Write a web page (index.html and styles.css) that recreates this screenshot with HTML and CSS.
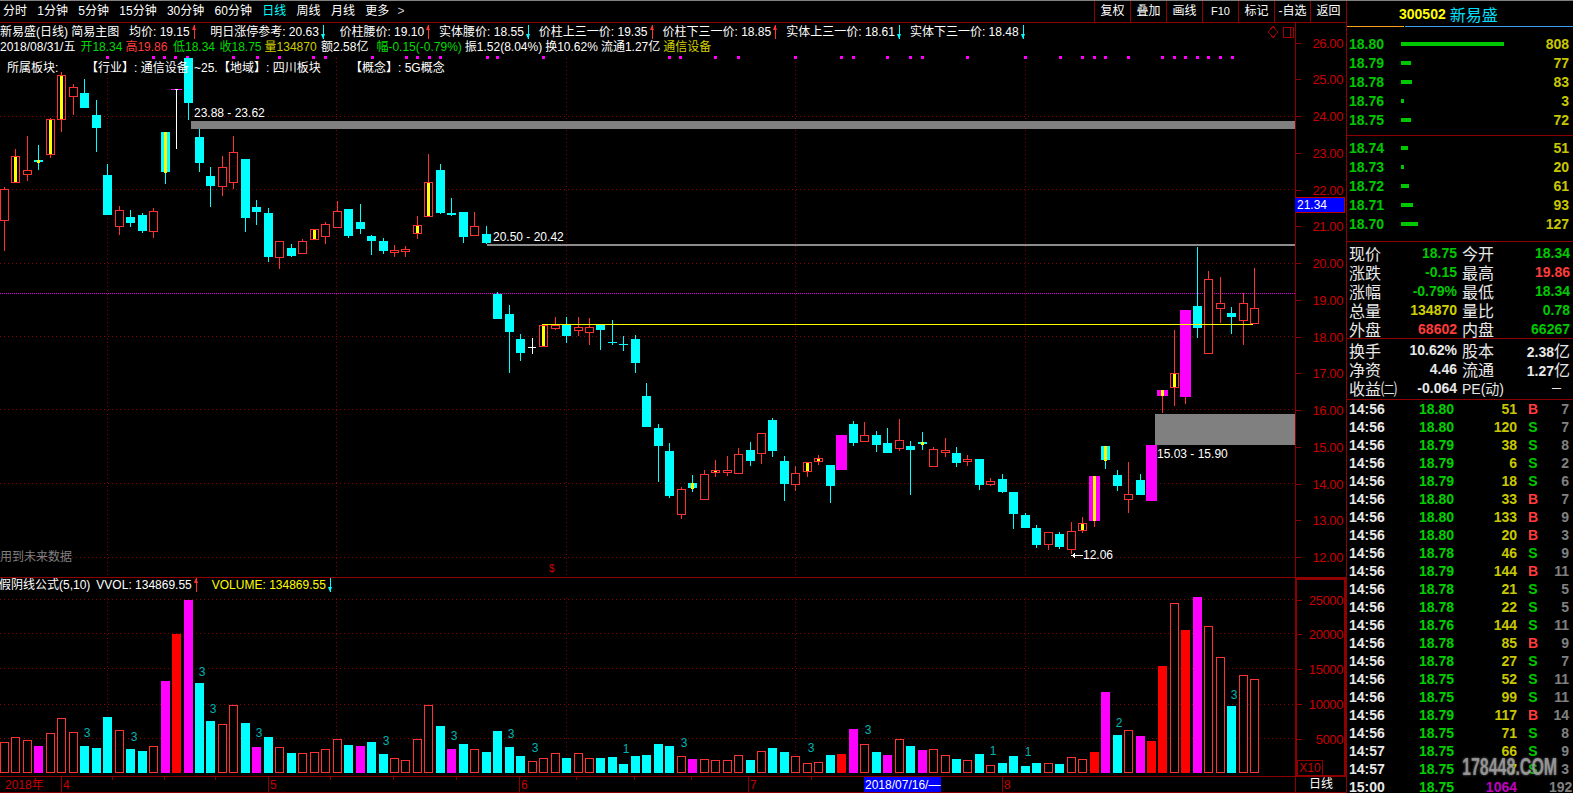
FILE: index.html
```html
<!DOCTYPE html>
<html lang="zh-CN">
<head>
    <meta charset="UTF-8">
    <title>新易盛 300502 日线</title>
    <link rel="stylesheet" href="styles.css">
</head>
<body>
<div class="app">
    <div class="main">
        <div class="toolbar">
            <div class="periods">
                <span>分时</span><span>1分钟</span><span>5分钟</span><span>15分钟</span><span>30分钟</span><span>60分钟</span>
                <span class="active">日线</span><span>周线</span><span>月线</span><span>更多</span><span class="more">&gt;</span>
            </div>
            <div class="tools">
                <span>复权</span><span>叠加</span><span>画线</span><span class="f10">F10</span><span>标记</span><span>-自选</span><span>返回</span>
            </div>
        </div>

        <div class="pane price-pane">
            <div class="plot">
                <svg id="priceChart" class="chart" viewBox="0 23 1295 554" width="1295" height="554"></svg>
                <div class="info">
                    <div class="info-row formula">
                        <span class="title">新易盛(日线) 简易主图</span>
                        <span class="item">均价: 19.15<i class="arrow up"></i></span>
                        <span class="item">明日涨停参考: 20.63<i class="arrow down"></i></span>
                        <span class="item">价柱腰价: 19.10<i class="arrow up"></i></span>
                        <span class="item">实体腰价: 18.55<i class="arrow down"></i></span>
                        <span class="item">价柱上三一价: 19.35<i class="arrow up"></i></span>
                        <span class="item">价柱下三一价: 18.85<i class="arrow up"></i></span>
                        <span class="item">实体上三一价: 18.61<i class="arrow down"></i></span>
                        <span class="item">实体下三一价: 18.48<i class="arrow down"></i></span>
                    </div>
                    <div class="info-row quote">
                        <span>2018/08/31/五</span>
                        <span class="green gap-open">开18.34</span>
                        <span class="red">高19.86</span>
                        <span class="green gap-low">低18.34</span>
                        <span class="green gap-close">收18.75</span>
                        <span class="yellow">量134870</span>
                        <span class="gap-close">额2.58亿</span>
                        <span class="green gap-range">幅-0.15(-0.79%)</span>
                        <span>振1.52(8.04%)</span>
                        <span>换10.62%</span>
                        <span>流通1.27亿</span>
                        <span class="yellow">通信设备</span>
                    </div>
                    <div class="info-row sector">
                        <span class="sec-title">所属板块:</span>
                        <span class="sec-a">【行业】: 通信设备</span>
                        <span class="sec-hidden">~25.</span>
                        <span class="sec-b">【地域】: 四川板块</span>
                        <span class="sec-c">【概念】: 5G概念</span>
                    </div>
                </div>
            </div>
            <svg id="priceAxis" class="axis" viewBox="1296 23 50 554" width="50" height="554"></svg>
            <div class="last-price">21.34</div>
        </div>

        <div class="pane vol-pane">
            <div class="plot">
                <svg id="volChart" class="chart" viewBox="0 578 1295 198" width="1295" height="198"></svg>
                <div class="vol-head">
                    <span class="vol-name">假阴线公式(5,10)</span>
                    <span>VVOL: 134869.55<i class="arrow up"></i></span>
                    <span class="yellow-bright">VOLUME: 134869.55<i class="arrow down"></i></span>
                </div>
            </div>
            <div class="vol-axis">
                <svg id="volAxis" class="axis" viewBox="1297 579 47 195" width="47" height="195"></svg>
                <div class="x10">X10</div>
            </div>
        </div>

        <div class="pane date-pane">
            <svg id="dateAxis" class="chart" viewBox="0 777 1295 15" width="1295" height="15"></svg>
            <div class="date-mode">日线</div>
        </div>
    </div>

    <div class="side">
        <div class="side-head"><b>300502</b><span>新易盛</span></div>
        <div class="side-rule"><i class="rule-orange"></i><i class="rule-blue"></i></div>

        <div class="book" id="askBook"></div>
        <div class="book bid" id="bidBook"></div>

        <div class="stats">
            <div class="stat"><span>现价</span><b class="green">18.75</b></div>
            <div class="stat"><span>今开</span><b class="green">18.34</b></div>
            <div class="stat"><span>涨跌</span><b class="green">-0.15</b></div>
            <div class="stat"><span>最高</span><b class="red">19.86</b></div>
            <div class="stat"><span>涨幅</span><b class="green">-0.79%</b></div>
            <div class="stat"><span>最低</span><b class="green">18.34</b></div>
            <div class="stat"><span>总量</span><b class="yellow">134870</b></div>
            <div class="stat"><span>量比</span><b class="green">0.78</b></div>
            <div class="stat"><span>外盘</span><b class="red">68602</b></div>
            <div class="stat"><span>内盘</span><b class="green">66267</b></div>
        </div>
        <div class="stats second">
            <div class="stat"><span>换手</span><b>10.62%</b></div>
            <div class="stat"><span>股本</span><b>2.38<em>亿</em></b></div>
            <div class="stat"><span>净资</span><b>4.46</b></div>
            <div class="stat"><span>流通</span><b>1.27<em>亿</em></b></div>
            <div class="stat"><span>收益㈡</span><b>-0.064</b></div>
            <div class="stat"><span class="pe">PE(动)</span><b class="dash">—</b></div>
        </div>

        <div class="ticks" id="ticks"></div>
        <div class="watermark">178448.COM</div>
    </div>
</div>
<script src="chart.js"></script>
</body>
</html>
```

FILE: styles.css
```css
html, body {
    margin: 0;
    background: #000;
}

body {
    width: 1573px;
    height: 793px;
    overflow: hidden;
    color: #fff;
    font: 12px "Liberation Sans", "Noto Sans CJK SC", sans-serif;
}

.app {
    display: flex;
    height: 792px;
    border-top: 1px solid #808080;
}

.main {
    width: 1346px;
    border-right: 1px solid #900000;
    flex: none;
}

/* top bar */
.toolbar {
    display: flex;
    justify-content: space-between;
    height: 21px;
    border-bottom: 1px solid #900000;
    line-height: 20px;
}

.periods {
    display: flex;
    gap: 10.3px;
    padding-left: 3px;
}

.periods .active {
    color: #00ffff;
}

.periods .more {
    margin-left: -2px;
    color: #ccc;
}

.tools {
    display: flex;
}

.tools span {
    width: 36px;
    box-sizing: border-box;
    border-left: 1px solid #900000;
    text-align: center;
}

.tools .f10 {
    font-size: 11px;
}

/* panes */
.pane {
    display: flex;
    position: relative;
}

.price-pane {
    height: 554px;
    border-bottom: 1px solid #900000;
}

.vol-pane {
    height: 198px;
    border-bottom: 1px solid #900000;
}

.date-pane {
    height: 15px;
    border-bottom: 1px solid #900000;
}

.plot {
    position: relative;
    width: 1295px;
    flex: none;
    overflow: hidden;
}

.chart {
    display: block;
    flex: none;
    overflow: hidden;
}

.plot .chart {
    position: absolute;
    left: 0;
    top: 0;
}

.axis {
    display: block;
    flex: none;
    border-left: 1px solid #900000;
}

.chart text, .axis text {
    font: 12px "Liberation Sans", "Noto Sans CJK SC", sans-serif;
    fill: #fff;
}

.axis text {
    font-size: 13px;
    letter-spacing: -0.4px;
    fill: #c80000;
}

.chart .date-label {
    fill: #c80000;
}

.chart .faded {
    fill: #808080;
}

.chart .count {
    fill: #00b4b4;
}

.chart .mark {
    font-size: 10px;
    fill: #d00000;
}

.last-price {
    position: absolute;
    left: 1295px;
    top: 174px;
    width: 50px;
    height: 16px;
    box-sizing: border-box;
    border: 1px solid #c00000;
    border-left: 0;
    padding-left: 2px;
    background: #0000ff;
    font-size: 12px;
    line-height: 14px;
}

/* text over the price chart */
.info {
    position: relative;
    padding-top: 2px;
}

.info-row {
    display: flex;
    height: 14px;
    line-height: 14px;
    white-space: nowrap;
}

.info-row.quote {
    gap: 3px;
    margin-top: 1px;
}

.gap-open {
    margin-left: 2px;
}

.gap-low {
    margin-left: 2.5px;
}

.gap-close {
    margin-left: 1.5px;
}

.gap-range {
    margin-left: 5px;
}

.formula .title {
    width: 129px;
}

.formula .item {
    margin-right: 8px;
}

.formula .item:nth-child(2),
.formula .item:nth-child(3) {
    margin-right: 13.5px;
}

.sector {
    margin-top: 7px;
}

.sec-title {
    margin-left: 7px;
    width: 79px;
}

.sec-a {
    width: 108px;
}

.sec-hidden {
    width: 24px;
}

.sec-b {
    width: 132px;
}

.arrow {
    display: inline-block;
    position: relative;
    width: 1px;
    height: 14px;
    margin-left: 4px;
    margin-right: 2px;
    vertical-align: top;
    background: currentColor;
}

.arrow::before {
    content: "";
    position: absolute;
    left: -2px;
    border-left: 2.5px solid transparent;
    border-right: 2.5px solid transparent;
}

.arrow.up {
    color: #ff3232;
}

.arrow.up::before {
    top: 0;
    border-bottom: 5px solid currentColor;
}

.arrow.down {
    color: #00ffff;
}

.arrow.down::before {
    bottom: 0;
    border-top: 5px solid currentColor;
}

.vol-head {
    position: relative;
    display: flex;
    height: 14px;
    line-height: 14px;
    white-space: nowrap;
}

.vol-name {
    margin-left: -1px;
    margin-right: 6px;
}

.vol-head .yellow-bright {
    margin-left: 13px;
    color: #ffff00;
}

.vol-axis {
    position: relative;
    width: 47px;
    height: 195px;
    border: 2px solid #900000;
    border-bottom-width: 1px;
}

.vol-axis .axis {
    border-left: 0;
}

.x10 {
    position: absolute;
    left: 0;
    bottom: 0;
    width: 24px;
    height: 14px;
    border: 1px solid #900000;
    border-bottom: 0;
    color: #c80000;
    font-size: 12px;
    line-height: 14px;
    text-align: center;
}

.date-mode {
    flex: 1;
    border-left: 1px solid #900000;
    line-height: 15px;
    text-align: center;
}

/* right column */
.side {
    position: relative;
    flex: 1;
    overflow: hidden;
}

.side-head {
    display: flex;
    align-items: center;
    gap: 4px;
    height: 25px;
    padding-left: 52px;
}

.side-head b {
    color: #ffff00;
    font-size: 14px;
}

.side-head span {
    color: #00e0ff;
    font-size: 16px;
}

.side-rule {
    display: flex;
    gap: 1px;
    height: 1px;
}

.rule-orange {
    width: 57px;
    background: #ffa020;
}

.rule-blue {
    flex: 1;
    background: #3c9cf0;
}

.book {
    padding: 7px 4px 6px 2px;
    border-bottom: 1px solid #900000;
}

.book.bid {
    padding: 2px 4px 8px 2px;
}

.book-row {
    display: grid;
    grid-template-columns: 52px 1fr 50px;
    align-items: center;
    height: 19px;
    font-size: 14px;
    font-weight: bold;
}

.book-row .price {
    color: #00c800;
}

.book-row .bar {
    display: block;
    height: 4px;
    background: #00c800;
}

.book-row .qty {
    color: #c8c800;
    text-align: right;
}

.stats {
    display: grid;
    grid-template-columns: 108px 108px;
    column-gap: 5px;
    grid-auto-rows: 19px;
    padding: 1px 0 0 2px;
    border-bottom: 1px solid #900000;
}

.stats.second {
    padding-bottom: 2px;
}

.stat {
    display: flex;
    justify-content: space-between;
    align-items: center;
    color: #e8e8e8;
    font-size: 16px;
    white-space: nowrap;
}

.stat b {
    color: #e8e8e8;
    font-size: 14px;
}

.stat em {
    font-size: 16px;
    font-style: normal;
    font-weight: normal;
}

.stat .pe {
    font-size: 14px;
}

.stat .dash {
    margin-right: 9px;
    font-size: 9px;
}

.stat b.green, .green {
    color: #00dc00;
}

.stat b.red, .red {
    color: #ff3c3c;
}

.stat b.yellow, .yellow {
    color: #d0d000;
}

.stats .stat b.green {
    color: #00c800;
}

.tick-row {
    display: grid;
    grid-template-columns: 70px 36px 62px 32px 20px;
    height: 15px;
    padding: 3px 0 0 2px;
    line-height: 12px;
    font-size: 14px;
    font-weight: bold;
    white-space: nowrap;
}

.tick-row:last-child {
    height: 12px;
}

.tick-row .time {
    color: #e8e8e8;
}

.tick-row .price {
    color: #00d000;
}

.tick-row .vol {
    color: #c8c800;
    text-align: right;
}

.tick-row .vol.big {
    color: #c000c0;
}

.tick-row .side-b {
    color: #ff3c3c;
    text-align: center;
}

.tick-row .side-s {
    color: #00c800;
    text-align: center;
}

.tick-row .num {
    color: #808080;
    text-align: right;
}

.watermark {
    position: absolute;
    left: 115px;
    top: 758px;
    color: rgba(170, 170, 170, 0.75);
    font-size: 16px;
    font-weight: bold;
    text-shadow: 0 0 2px #777;
    transform: scaleY(1.45);
}
```

FILE: chart.js
```js
const RED = "#ff3232";
const CYAN = "#00ffff";
const MAGENTA = "#ff00ff";
const YELLOW = "#ffff00";
const GRID = "#8c0000";
const STEP = 11.47;

// type, wick top, body top, body bottom, wick bottom (page y)
const candles = [
    ["r",187,189,221,251], ["y",149,156,183,183], ["r",136,170,175,181], ["cy",145,160,162,170],
    ["y",118,119,155,158], ["y",72,75,120,132], ["r",84,87,97,115], ["c",79,93,108,108],
    ["c",100,115,128,152], ["c",164,175,215,215], ["r",206,210,227,235], ["c",210,217,223,227],
    ["c",213,215,231,233], ["r",208,211,232,238], ["cy",132,132,172,184], ["x",89,89,90,149],
    ["c",58,58,103,120], ["c",129,137,163,172], ["c",167,176,186,207], ["r",156,167,187,196],
    ["r",136,152,183,189], ["c",159,159,218,232], ["c",200,207,212,225], ["c",208,213,257,262],
    ["r",241,241,258,269], ["c",244,248,256,257], ["r",239,241,254,254], ["y",229,229,240,240],
    ["r",222,224,237,244], ["r",201,211,228,228], ["c",209,209,236,238], ["c",204,222,229,234],
    ["c",235,236,241,255], ["c",238,241,251,254], ["r",245,250,253,257], ["r",246,249,252,257],
    ["y",216,225,234,239], ["y",154,182,217,217], ["c",164,170,213,214], ["c",198,213,215,216],
    ["c",212,212,237,243], ["r",212,226,236,236], ["c",226,234,243,244], ["c",292,294,319,319],
    ["c",305,314,332,373], ["c",334,339,353,361], ["w",338,347,348,354], ["y",325,325,347,347],
    ["r",317,325,329,330], ["c",317,325,336,343], ["r",317,327,331,336], ["r",318,327,333,345],
    ["c",325,325,330,350], ["c",320,342,343,345], ["c",336,344,345,351], ["c",335,339,363,373],
    ["c",383,396,427,427], ["c",424,428,446,482], ["c",443,451,496,498], ["r",487,489,515,519],
    ["cy",475,483,488,492], ["r",470,474,500,500], ["y",460,470,473,477], ["r",456,470,473,476],
    ["r",448,454,474,474], ["c",442,450,461,466], ["r",433,433,454,464], ["c",418,420,451,457],
    ["c",456,461,484,501], ["r",466,473,485,491], ["y",462,462,472,477], ["y",455,458,462,465],
    ["c",465,465,486,503], ["m",435,435,470,470], ["c",421,424,443,446], ["r",422,435,442,442],
    ["c",431,435,445,452], ["c",428,443,453,453], ["r",419,440,449,451], ["c",441,446,450,495],
    ["cy",432,442,444,450], ["r",447,449,467,467], ["r",438,450,453,457], ["c",447,453,463,467],
    ["r",455,459,462,466], ["c",459,459,485,490], ["r",478,481,485,486], ["c",474,479,492,493],
    ["c",492,492,514,529], ["c",513,515,528,528], ["c",525,528,545,548], ["r",532,532,545,550],
    ["c",532,534,547,549], ["r",522,531,550,554], ["y",517,523,531,533], ["my",476,476,521,527],
    ["cy",446,446,460,469], ["c",470,475,486,491], ["r",462,494,500,513], ["c",474,480,495,495],
    ["m",445,445,501,501], ["my",390,390,396,413], ["y",330,373,388,406], ["m",310,310,397,404],
    ["c",247,306,328,338], ["r",271,279,354,354], ["r",277,303,309,323], ["c",307,313,317,334],
    ["r",293,303,321,345], ["r",268,308,324,324]
];

// volume bars, type letter + top y. r hollow, c cyan, m magenta, f solid red
const volumes = ("r742 r737 r740 m746 r733 r718 r732 c746 c748 c717 r730 c749 c751 r746 m681 f634 m600 c683 c721 r724 " +
    "r705 c723 m747 c737 r747 c753 r753 r752 r749 r739 c745 m746 c742 c754 r758 r760 r739 r705 c726 m749 " +
    "c744 r749 c752 c731 c747 c756 r761 r758 r753 c758 r753 r758 c758 c757 c764 c756 c755 c744 c746 r756 " +
    "m759 r759 r760 r760 r755 c760 r751 c748 c752 r756 r763 r762 c755 f754 m729 r744 c752 m755 r739 c746 " +
    "m750 r749 r755 c759 r760 c754 r765 c763 c756 c766 c763 r763 c764 r757 r759 f752 m692 c735 r730 m736 " +
    "f741 f666 r603 f630 m597 r626 r657 c706 r675 r679").split(" ");

// little numbers over the volume bars: x, centre y, text
const volCounts = [
    [87,733,3], [134,737,3], [202,672,3], [213,709,3], [259,733,3], [386,741,3], [454,736,3], [511,734,3],
    [535,748,3], [626,749,1], [684,743,3], [811,748,3], [868,730,3], [993,751,1], [1028,752,1], [1119,723,2], [1234,695,3]
];

const dotsX = [107,153,164,175,187,233,257,279,313,325,372,406,417,429,440,487,497,543,
    669,680,715,738,795,841,853,887,910,922,967,1025,1060,1082,1094,1105,1128,1162,1174,1185,1197,1208,1220,1232];

const gridX = [107, 336, 566, 795, 1025];

function rect(x, y, w, h, fill) {
    return `<rect x="${x}" y="${y}" width="${w}" height="${h}" fill="${fill}"/>`;
}

function outline(x, y, w, h, stroke) {
    return `<rect x="${x + 0.5}" y="${y + 0.5}" width="${w - 1}" height="${h - 1}" fill="#000" stroke="${stroke}"/>`;
}

function dotted(x1, y1, x2, y2, color, dash) {
    return `<line x1="${x1}" y1="${y1 + 0.5}" x2="${x2}" y2="${y2 + 0.5}" stroke="${color}" stroke-dasharray="${dash}"/>`;
}

function dottedV(x, y1, y2) {
    return `<line x1="${x + 0.5}" y1="${y1}" x2="${x + 0.5}" y2="${y2}" stroke="${GRID}" stroke-dasharray="1 3"/>`;
}

function label(x, y, text, cls) {
    return `<text x="${x}" y="${y}"${cls ? ` class="${cls}"` : ""}>${text}</text>`;
}

function drawCandle(c, i) {
    const [type, wickTop, top, bottom, wickBottom] = c;
    const left = Math.round(i * STEP);
    const h = bottom - top;
    const wick = (color) => rect(left + 4, wickTop, 1, wickBottom - wickTop, color);
    switch (type) {
        case "r":
            return wick(RED) + outline(left, top, 9, h, RED);
        case "y":
            return wick(RED) + outline(left, top, 9, h, RED) + rect(left + 3, top + 1, 3, h - 2, YELLOW);
        case "c":
            return wick(CYAN) + rect(left, top, 9, h, CYAN);
        case "cy":
            return wick(CYAN) + rect(left, top, 9, h, CYAN) + rect(left + 3, top, 3, h + 1, YELLOW);
        case "m":
            return wick(RED) + rect(left - 1, top, 11, h, MAGENTA);
        case "my":
            return wick(RED) + rect(left - 1, top, 11, h, MAGENTA) + rect(left + 3, top, 3, h, YELLOW);
        case "x":
            return rect(left + 4, wickTop, 1, wickBottom - wickTop, "#fff") + rect(left - 1, top, 11, 1, MAGENTA) + rect(left + 3, top, 3, 1, "#fff");
        default:
            return rect(left + 4, wickTop, 1, wickBottom - wickTop, "#fff") + rect(left, top, 8, 1, "#fff");
    }
}

function drawPrice() {
    let s = '<g shape-rendering="crispEdges">';
    [116, 189, 263, 336, 409, 483, 557].forEach(y => { s += dotted(0, y, 1295, y, GRID, "1 3"); });
    gridX.forEach(x => { s += dottedV(x, 58, 577); });
    dotsX.forEach(x => { s += rect(x - 1, 56, 3, 3, MAGENTA); });

    // zones sit behind the candles
    s += rect(191, 121, 1104, 8, "#808080");
    s += rect(487, 244, 808, 2, "#8c8c8c");
    s += rect(1155, 414, 140, 31, "#808080");
    s += dotted(0, 293, 1295, 293, "#e000e0", "1 1");

    candles.forEach((c, i) => { s += drawCandle(c, i); });
    s += rect(542, 324, 711, 1, YELLOW);

    // corner marks
    s += '<path d="M1273 26.5 L1278 32 L1273 37.5 L1268 32 Z" fill="none" stroke="#a00000"/>';
    s += outline(1283, 27, 11, 11, "#a00000") + rect(1290, 27, 1, 11, "#a00000");
    s += rect(1071, 555, 12, 1, "#fff") + '<path d="M1071 555.5 L1075 553 V558 Z" fill="#fff"/>';
    s += "</g>";

    s += label(194, 117, "23.88 - 23.62");
    s += label(493, 241, "20.50 - 20.42");
    s += label(1157, 458, "15.03 - 15.90");
    s += label(1083, 559, "12.06");
    s += label(0, 561, "用到未来数据", "faded");
    s += label(549, 572, "$", "mark");
    document.getElementById("priceChart").innerHTML = s;

    let a = '<g shape-rendering="crispEdges">';
    let text = "";
    for (let p = 26; p >= 12; p--) {
        const y = Math.round(116 + (24 - p) * 36.75);
        a += rect(1296, y, 5, 1, GRID);
        text += `<text x="1343" y="${y + 5}" text-anchor="end">${p}.00</text>`;
    }
    document.getElementById("priceAxis").innerHTML = a + "</g>" + text;
}

function drawVolume() {
    const base = 773;
    let s = '<g shape-rendering="crispEdges">';
    [599, 633, 668, 704, 738].forEach(y => { s += dotted(0, y, 1295, y, GRID, "1 3"); });
    gridX.forEach(x => { s += dottedV(x, 598, 773); });
    volumes.forEach((v, i) => {
        const type = v[0];
        const top = Number(v.slice(1));
        const left = Math.round(i * STEP);
        if (type === "r") s += outline(left, top, 9, base - top, RED);
        if (type === "c") s += rect(left, top, 9, base - top, CYAN);
        if (type === "m") s += rect(left, top, 9, base - top, MAGENTA);
        if (type === "f") s += rect(left, top, 9, base - top, "#ff0000");
    });
    s += "</g>";
    volCounts.forEach(([x, y, n]) => { s += `<text x="${x}" y="${y + 4}" text-anchor="middle" class="count">${n}</text>`; });
    document.getElementById("volChart").innerHTML = s;

    let a = '<g shape-rendering="crispEdges">';
    let text = "";
    [[25000, 599], [20000, 633], [15000, 668], [10000, 703], [5000, 738]].forEach(([v, y]) => {
        a += rect(1297, y, 5, 1, GRID);
        text += `<text x="1343" y="${y + 5}" text-anchor="end">${v}</text>`;
    });
    document.getElementById("volAxis").innerHTML = a + "</g>" + text;
}

function drawDates() {
    let s = '<g shape-rendering="crispEdges">';
    [112, 164, 215, 330, 393, 456, 576, 634, 691, 811].forEach(x => { s += rect(x, 777, 1, 3, GRID); });
    [61, 268, 519, 748, 1002].forEach(x => { s += rect(x, 777, 1, 15, GRID); });
    s += rect(864, 777, 77, 15, "#0000ff") + "</g>";
    s += label(5, 789, "2018年", "date-label");
    s += label(63, 789, "4", "date-label");
    s += label(270, 789, "5", "date-label");
    s += label(521, 789, "6", "date-label");
    s += label(750, 789, "7", "date-label");
    s += label(1004, 789, "8", "date-label");
    s += label(865, 789, "2018/07/16/—");
    document.getElementById("dateAxis").innerHTML = s;
}

function fillBook(id, rows) {
    document.getElementById(id).innerHTML = rows.map(([price, width, qty]) =>
        `<div class="book-row"><span class="price">${price}</span><span class="bar-wrap"><i class="bar" style="width:${width}px"></i></span><span class="qty">${qty}</span></div>`
    ).join("");
}

function fillTicks() {
    const rows = [
        ["14:56","18.80",51,"B",7], ["14:56","18.80",120,"S",7], ["14:56","18.79",38,"S",8], ["14:56","18.79",6,"S",2],
        ["14:56","18.79",18,"S",6], ["14:56","18.80",33,"B",7], ["14:56","18.80",133,"B",9], ["14:56","18.80",20,"B",3],
        ["14:56","18.78",46,"S",9], ["14:56","18.79",144,"B",11], ["14:56","18.78",21,"S",5], ["14:56","18.78",22,"S",5],
        ["14:56","18.76",144,"S",11], ["14:56","18.78",85,"B",9], ["14:56","18.78",27,"S",7], ["14:56","18.75",52,"S",11],
        ["14:56","18.75",99,"S",11], ["14:56","18.79",117,"B",14], ["14:56","18.75",71,"S",8], ["14:57","18.75",66,"S",9],
        ["14:57","18.75",7,"S",3], ["15:00","18.75",1064,"",192]
    ];
    document.getElementById("ticks").innerHTML = rows.map(([t, p, v, f, n]) =>
        `<div class="tick-row"><span class="time">${t}</span><span class="price">${p}</span>` +
        `<span class="vol${v > 1000 ? " big" : ""}">${v}</span><span class="side-${f.toLowerCase()}">${f}</span><span class="num">${n}</span></div>`
    ).join("");
}

drawPrice();
drawVolume();
drawDates();
fillBook("askBook", [["18.80",103,808], ["18.79",10,77], ["18.78",11,83], ["18.76",3,3], ["18.75",10,72]]);
fillBook("bidBook", [["18.74",7,51], ["18.73",3,20], ["18.72",8,61], ["18.71",12,93], ["18.70",17,127]]);
fillTicks();
```
